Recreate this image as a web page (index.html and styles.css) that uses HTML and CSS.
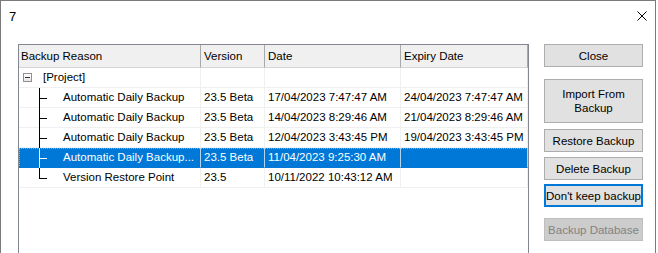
FILE: index.html
```html
<!DOCTYPE html>
<html lang="en">
  <head>
    <meta charset="utf-8" />
    <title>7</title>
    <link rel="stylesheet" href="styles.css">
  </head>
  <body>
    <div class="window">
      <!-- Title bar -->
      <div class="title-bar">
        <span class="title">7</span>
        <svg class="close-x" width="10" height="10" viewBox="0 0 10 10">
          <path d="M0.5 0.5 L9.5 9.5 M9.5 0.5 L0.5 9.5" stroke="#000" stroke-width="1" fill="none" />
        </svg>
      </div>

      <div class="content">
        <!-- Backup list -->
        <div class="list-view">
          <div class="lv-row lv-header">
            <div class="cell">Backup Reason</div>
            <div class="cell">Version</div>
            <div class="cell">Date</div>
            <div class="cell">Expiry Date</div>
          </div>
          <div class="lv-row">
            <div class="cell tree-root"><span class="minus-box"></span>[Project]</div>
            <div class="cell"></div>
            <div class="cell"></div>
            <div class="cell"></div>
          </div>
          <div class="lv-row">
            <div class="cell tree-child">Automatic Daily Backup</div>
            <div class="cell">23.5 Beta</div>
            <div class="cell">17/04/2023 7:47:47 AM</div>
            <div class="cell">24/04/2023 7:47:47 AM</div>
          </div>
          <div class="lv-row">
            <div class="cell tree-child">Automatic Daily Backup</div>
            <div class="cell">23.5 Beta</div>
            <div class="cell">14/04/2023 8:29:46 AM</div>
            <div class="cell">21/04/2023 8:29:46 AM</div>
          </div>
          <div class="lv-row">
            <div class="cell tree-child">Automatic Daily Backup</div>
            <div class="cell">23.5 Beta</div>
            <div class="cell">12/04/2023 3:43:45 PM</div>
            <div class="cell">19/04/2023 3:43:45 PM</div>
          </div>
          <div class="lv-row selected">
            <div class="cell tree-child">Automatic Daily Backup...</div>
            <div class="cell">23.5 Beta</div>
            <div class="cell">11/04/2023 9:25:30 AM</div>
            <div class="cell"></div>
          </div>
          <div class="lv-row">
            <div class="cell tree-child last">Version Restore Point</div>
            <div class="cell">23.5</div>
            <div class="cell">10/11/2022 10:43:12 AM</div>
            <div class="cell"></div>
          </div>
        </div>

        <!-- Actions -->
        <div class="actions">
          <button class="btn btn-close">Close</button>
          <button class="btn btn-tall">Import From<br>Backup</button>
          <button class="btn btn-restore">Restore Backup</button>
          <button class="btn btn-delete">Delete Backup</button>
          <button class="btn btn-focus">Don't keep backup</button>
          <button class="btn btn-disabled" disabled>Backup Database</button>
        </div>
      </div>
    </div>
  </body>
</html>
```

FILE: styles.css
```css
* {
  margin: 0;
  padding: 0;
  box-sizing: border-box;
}

body {
  font-family: "Liberation Sans", Arial, sans-serif;
  font-size: 11.5px;
  color: #000;
  background: #fff;
  overflow: hidden;
}

.window {
  width: 656px;
  height: 253px;
  border: 1px solid #7a7a7a;
  border-bottom: none;
  background: #fff;
  overflow: hidden;
}

.title-bar {
  height: 29px;
  display: flex;
  align-items: center;
  justify-content: space-between;
  padding: 0 8px 0 8px;
}

.title {
  font-size: 13px;
  margin-top: 2px;
}

.close-x {
  margin-top: 1px;
}

.content {
  display: flex;
  align-items: flex-start;
  padding: 14px 0 0 17px;
}

/* list view */
.list-view {
  width: 511px;
  height: 230px;
  border: 1px solid #828790;
  background: #fff;
}

.lv-row {
  display: grid;
  grid-template-columns: 182px 64px 136px 127px;
  height: 20px;
}

.cell {
  border-right: 1px solid #f0f0f0;
  border-bottom: 1px solid #f0f0f0;
  padding-left: 3px;
  line-height: 19px;
  white-space: nowrap;
  overflow: hidden;
  position: relative;
}

.lv-header {
  height: 23px;
  background: #f0f0f0;
}

.lv-header .cell {
  border-right: 1px solid #a9a9a9;
  border-bottom: 1px solid #d5d5d5;
  line-height: 22px;
  padding-left: 3px;
}

.lv-header .cell:first-child {
  padding-left: 2px;
}

/* tree */
.tree-root {
  padding-left: 24px;
}

.minus-box {
  position: absolute;
  left: 4px;
  top: 5px;
  width: 9px;
  height: 9px;
  border: 1px solid #919191;
  background: linear-gradient(#fff, #e6e6e6);
}

.minus-box::after {
  content: "";
  position: absolute;
  left: 1px;
  top: 3px;
  width: 5px;
  height: 1px;
  background: #333;
}

.tree-child {
  padding-left: 44px;
  overflow: visible;
}

.tree-child::before {
  content: "";
  position: absolute;
  left: 20px;
  top: 0;
  width: 1px;
  height: 20px;
  background: #000;
}

.tree-child::after {
  content: "";
  position: absolute;
  left: 20px;
  top: 10px;
  width: 8px;
  height: 1px;
  background: #000;
}

.tree-child.last::before {
  height: 11px;
}

/* selection */
.selected {
  background: #0078d7;
  color: #fff;
  outline: 1px dotted #e89a3c;
  outline-offset: -1px;
}

.selected .cell {
  border-right-color: #b3d4f0;
  border-bottom-color: #0078d7;
}

.selected .tree-child::before,
.selected .tree-child::after {
  background: #fff;
}

/* buttons */
.actions {
  display: flex;
  flex-direction: column;
  margin-left: 15px;
}

.btn {
  width: 99px;
  height: 23px;
  padding: 0;
  font-family: "Liberation Sans", Arial, sans-serif;
  font-size: 11.5px;
  color: #000;
  background: #e1e1e1;
  border: 1px solid #adadad;
  line-height: 14px;
  white-space: nowrap;
}

.btn-tall {
  height: 44px;
  margin-top: 12px;
  white-space: normal;
}

.btn-restore {
  margin-top: 6px;
}

.btn-delete {
  margin-top: 5px;
}

.btn-focus {
  margin-top: 4px;
  border: 2px solid #0078d7;
}

.btn-disabled {
  margin-top: 11px;
  background: #cccccc;
  border-color: #bfbfbf;
  color: #838383;
}
```
